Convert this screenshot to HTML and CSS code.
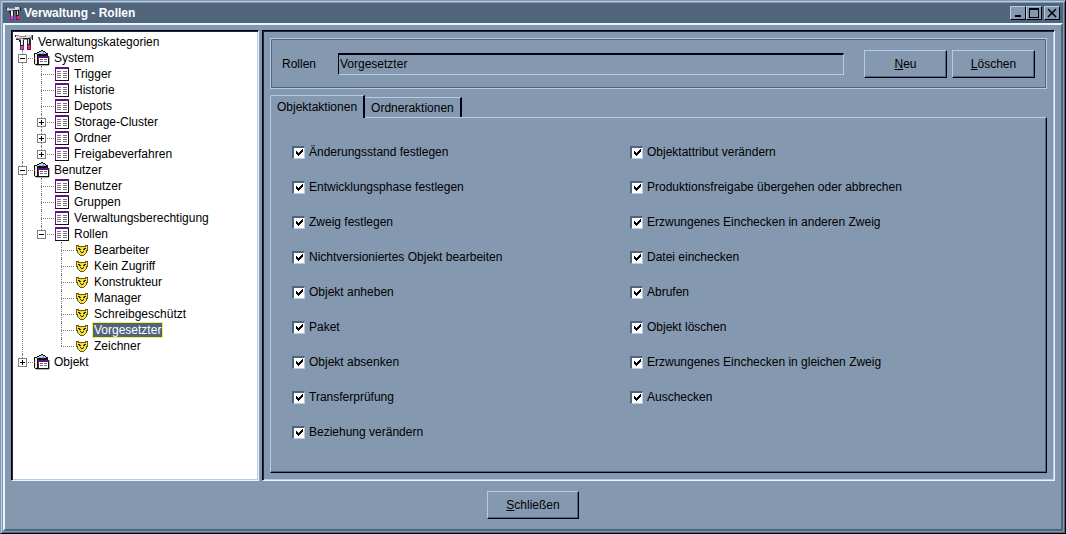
FILE: index.html
```html
<!DOCTYPE html>
<html lang="de">
<head>
  <meta charset="UTF-8">
  <title>Verwaltung - Rollen</title>
  <link rel="stylesheet" href="styles.css">
</head>
<body>
  <svg class="sprite" aria-hidden="true">
    <symbol id="tools" viewBox="0 0 18 16" shape-rendering="crispEdges">
      <path fill="#8c8c94" d="M1 1h3v1h6V1h7v4h-2v1H1z"/>
      <path fill="#dcdce0" d="M1 2h3v1h7V1h5v2h-2v1H1z"/>
      <path fill="#222" d="M0 1h1v2H0zM1 5h3v1H1zM8 4h7v1H8zM17 1h1v5h-1zM4 6h1v2H4z"/>
      <path fill="#222" d="M5 6h4v6H5zM12 5h4v6h-4z"/>
      <path fill="#d8d8d8" d="M6 5h2v6H6zM13 5h1v5h-1z"/>
      <path fill="#fff" d="M6 5h1v5H6z"/>
      <path fill="#8a1e9c" d="M5 12h4v4H5z"/>
      <path fill="#e040c8" d="M6 12h2v3H6z"/>
      <path fill="#80103c" d="M12 11h4v5h-4z"/>
      <path fill="#e82860" d="M13 11h2v4h-2z"/>
    </symbol>
    <symbol id="clip" viewBox="0 0 16 16" shape-rendering="crispEdges">
      <path fill="#b0b0b0" d="M12 4h2v2h2v9h-1v1H2v-1h10z"/>
      <path fill="#111" d="M0 3h3V2h2V1h2V0h2v1h2v1h1v1h2v3h1v9H1v-1H0z"/>
      <path fill="#f3efc0" d="M1 4h2v10H1z"/>
      <path fill="#a9b4e6" d="M5 2h2V1h2v1h2v1h1v1H3V3h2z"/>
      <path fill="#d4dcf8" d="M6 2h2v1H6z"/>
      <path fill="#fff" d="M5 8h9v6H5z"/>
      <path fill="#5c1488" d="M4 6h11v2H5v6H4z"/>
      <path fill="#777" d="M6 9h3v1H6zM10 9h3v1h-3zM6 11h3v1H6zM10 11h3v1h-3z"/>
    </symbol>
    <symbol id="list" viewBox="0 0 14 14" shape-rendering="crispEdges">
      <path fill="#111" d="M0 0h14v14H0z"/>
      <path fill="#fff" d="M1 2h12v11H1z"/>
      <path fill="#5c1488" d="M0 0h14v2H0zM0 2h1v11H0z"/>
      <path fill="#777" d="M2 4h4v1H2zM8 4h4v1H8zM2 6h4v1H2zM8 6h4v1H8zM2 8h4v1H2zM8 8h4v1H8zM2 10h4v1H2zM8 10h4v1H8z"/>
    </symbol>
    <symbol id="mask" viewBox="0 0 12 11" shape-rendering="crispEdges">
      <path fill="#6a5420" d="M0 0h3v1h6V0h3v6h-1v2h-1v1H9v1H8v1H4v-1H3V9H2V8H1V6H0z"/>
      <path fill="#f4e030" d="M1 1h1v1h8V1h1v4h-1v3H9v1H8v1H4V9H3V8H2V5H1z"/>
      <path fill="#222" d="M2 3h2v1h1v1H3V4H2zM8 3h2v1H9v1H7V4h1zM4 6h1v1h2V6h1v1H7v1H5V7H4z"/>
    </symbol>
  </svg>

  <div class="window">
    <header class="titlebar">
      <svg class="icon-app"><use href="#tools"/></svg>
      <h1>Verwaltung - Rollen</h1>
      <button class="win-btn" aria-label="Minimieren"><svg viewBox="0 0 10 10" shape-rendering="crispEdges"><path d="M2 7h6v2H2z"/></svg></button>
      <button class="win-btn" aria-label="Maximieren"><svg viewBox="0 0 10 10" shape-rendering="crispEdges"><path fill-rule="evenodd" d="M0 0h10v10H0zM1 2v7h8V2z"/></svg></button>
      <button class="win-btn win-close" aria-label="Schließen"><svg viewBox="0 0 10 10"><path d="M1 1l8 8M9 1L1 9" stroke="#000" stroke-width="1.5"/></svg></button>
    </header>

    <div class="content">
      <main class="panes">
        <nav class="tree">
          <div class="root"><svg class="icon-tools"><use href="#tools"/></svg><span>Verwaltungskategorien</span></div>
          <ul>
            <li>
              <div class="node"><button class="toggle" aria-label="Zuklappen"></button><svg class="icon-clip"><use href="#clip"/></svg><span>System</span></div>
              <ul>
                <li><div class="node"><svg class="icon-list"><use href="#list"/></svg><span>Trigger</span></div></li>
                <li><div class="node"><svg class="icon-list"><use href="#list"/></svg><span>Historie</span></div></li>
                <li><div class="node"><svg class="icon-list"><use href="#list"/></svg><span>Depots</span></div></li>
                <li><div class="node"><button class="toggle plus" aria-label="Aufklappen"></button><svg class="icon-list"><use href="#list"/></svg><span>Storage-Cluster</span></div></li>
                <li><div class="node"><button class="toggle plus" aria-label="Aufklappen"></button><svg class="icon-list"><use href="#list"/></svg><span>Ordner</span></div></li>
                <li><div class="node"><button class="toggle plus" aria-label="Aufklappen"></button><svg class="icon-list"><use href="#list"/></svg><span>Freigabeverfahren</span></div></li>
              </ul>
            </li>
            <li>
              <div class="node"><button class="toggle" aria-label="Zuklappen"></button><svg class="icon-clip"><use href="#clip"/></svg><span>Benutzer</span></div>
              <ul>
                <li><div class="node"><svg class="icon-list"><use href="#list"/></svg><span>Benutzer</span></div></li>
                <li><div class="node"><svg class="icon-list"><use href="#list"/></svg><span>Gruppen</span></div></li>
                <li><div class="node"><svg class="icon-list"><use href="#list"/></svg><span>Verwaltungsberechtigung</span></div></li>
                <li>
                  <div class="node"><button class="toggle" aria-label="Zuklappen"></button><svg class="icon-list"><use href="#list"/></svg><span>Rollen</span></div>
                  <ul>
                    <li><div class="node"><svg class="icon-mask"><use href="#mask"/></svg><span>Bearbeiter</span></div></li>
                    <li><div class="node"><svg class="icon-mask"><use href="#mask"/></svg><span>Kein Zugriff</span></div></li>
                    <li><div class="node"><svg class="icon-mask"><use href="#mask"/></svg><span>Konstrukteur</span></div></li>
                    <li><div class="node"><svg class="icon-mask"><use href="#mask"/></svg><span>Manager</span></div></li>
                    <li><div class="node"><svg class="icon-mask"><use href="#mask"/></svg><span>Schreibgeschützt</span></div></li>
                    <li><div class="node"><svg class="icon-mask"><use href="#mask"/></svg><span class="selected">Vorgesetzter</span></div></li>
                    <li><div class="node"><svg class="icon-mask"><use href="#mask"/></svg><span>Zeichner</span></div></li>
                  </ul>
                </li>
              </ul>
            </li>
            <li>
              <div class="node"><button class="toggle plus" aria-label="Aufklappen"></button><svg class="icon-clip"><use href="#clip"/></svg><span>Objekt</span></div>
            </li>
          </ul>
        </nav>

        <section class="detail">
          <div class="role-box">
            <label for="rolle">Rollen</label>
            <input type="text" id="rolle" value="Vorgesetzter">
            <button class="btn"><u>N</u>eu</button>
            <button class="btn"><u>L</u>öschen</button>
          </div>

          <div class="tabs" role="tablist">
            <button class="tab active" role="tab" aria-selected="true">Objektaktionen</button>
            <button class="tab" role="tab" aria-selected="false">Ordneraktionen</button>
          </div>

          <div class="tab-panel" role="tabpanel">
            <div class="checks">
              <label><input type="checkbox" checked>Änderungsstand festlegen</label>
              <label><input type="checkbox" checked>Entwicklungsphase festlegen</label>
              <label><input type="checkbox" checked>Zweig festlegen</label>
              <label><input type="checkbox" checked>Nichtversioniertes Objekt bearbeiten</label>
              <label><input type="checkbox" checked>Objekt anheben</label>
              <label><input type="checkbox" checked>Paket</label>
              <label><input type="checkbox" checked>Objekt absenken</label>
              <label><input type="checkbox" checked>Transferprüfung</label>
              <label><input type="checkbox" checked>Beziehung verändern</label>
            </div>
            <div class="checks">
              <label><input type="checkbox" checked>Objektattribut verändern</label>
              <label><input type="checkbox" checked>Produktionsfreigabe übergehen oder abbrechen</label>
              <label><input type="checkbox" checked>Erzwungenes Einchecken in anderen Zweig</label>
              <label><input type="checkbox" checked>Datei einchecken</label>
              <label><input type="checkbox" checked>Abrufen</label>
              <label><input type="checkbox" checked>Objekt löschen</label>
              <label><input type="checkbox" checked>Erzwungenes Einchecken in gleichen Zweig</label>
              <label><input type="checkbox" checked>Auschecken</label>
            </div>
          </div>
        </section>
      </main>

      <footer>
        <button class="btn btn-close"><u>S</u>chließen</button>
      </footer>
    </div>
  </div>
</body>
</html>
```

FILE: styles.css
```css
:root {
  --face: #8498b0;
  --light: #b4cce4;
  --white: #e8f6ff;
  --shade: #50647c;
  --dark: #000010;
}

* {
  box-sizing: border-box;
}

body {
  margin: 0;
  background: var(--face);
  color: #000;
  font-family: "Liberation Sans", Arial, sans-serif;
  font-size: 12px;
  line-height: 16px;
}

button,
input {
  font: inherit;
  color: inherit;
  margin: 0;
  padding: 0;
  border-radius: 0;
}

ul {
  list-style: none;
  margin: 0;
  padding: 0;
}

.sprite {
  position: absolute;
  width: 0;
  height: 0;
}

.window {
  display: flex;
  flex-direction: column;
  min-height: 100vh;
  padding: 2px;
  border: 1px solid var(--dark);
  border-top-color: var(--face);
  border-left-color: var(--face);
  box-shadow: inset 1px 1px var(--light), inset -1px -1px var(--shade);
}

/* Titelleiste */
.titlebar {
  display: flex;
  align-items: center;
  height: 20px;
  padding: 0 3px;
  background: var(--shade);
}

.titlebar h1 {
  flex: 1;
  margin: 0 0 0 3px;
  color: #fff;
  font-size: 12px;
  line-height: 16px;
}

.icon-app {
  width: 15px;
  height: 14px;
}

.win-btn {
  display: flex;
  align-items: center;
  justify-content: center;
  width: 16px;
  height: 14px;
  background: var(--face);
  border: 1px solid var(--dark);
  border-top-color: var(--light);
  border-left-color: var(--light);
}

.win-btn svg {
  width: 10px;
  height: 10px;
}

.win-close {
  margin-left: 2px;
}

.content {
  display: flex;
  flex-direction: column;
  flex: 1;
  padding: 5px 6px 10px;
  border: 2px solid var(--shade);
  border-top-color: var(--white);
  border-left-color: var(--white);
}

.panes {
  display: grid;
  grid-template-columns: 248px 1fr;
  gap: 3px;
  flex: 1;
}

.tree,
.detail {
  border: 1px solid var(--white);
  border-top-color: var(--dark);
  border-left-color: var(--dark);
  box-shadow: inset 1px 1px #20283c, inset -1px -1px var(--light);
}

/* Baum */
.tree {
  padding: 3px;
  background: #fff;
}

.root,
.node {
  display: flex;
  align-items: center;
  height: 16px;
}

.root span {
  margin-left: 5px;
}

.icon-tools {
  width: 18px;
  height: 16px;
}

.icon-clip {
  width: 16px;
  height: 16px;
}

.icon-list {
  width: 14px;
  height: 14px;
  margin-left: 1px;
}

.icon-mask {
  width: 12px;
  height: 11px;
  margin-left: 2px;
  margin-right: 1px;
}

.node span {
  padding: 0 1px;
  margin-left: 4px;
  line-height: 14px;
}

.icon-clip + span {
  margin-left: 3px;
}

.node .selected {
  background: var(--shade);
  color: #fff;
  outline: 1px solid #f4f040;
}

.tree li {
  position: relative;
  padding-left: 19px;
}

.tree li li {
  padding-left: 20px;
}

/* gepunktete Verbindungslinien */
.tree li::before,
.tree li::after {
  content: "";
  position: absolute;
  left: 7px;
}

.tree li::before {
  top: 0;
  bottom: 0;
  border-left: 1px dotted #808080;
}

.tree li:last-child::before {
  bottom: auto;
  height: 8px;
}

.tree li::after {
  top: 8px;
  width: 13px;
  border-top: 1px dotted #808080;
}

.toggle {
  position: absolute;
  z-index: 1;
  left: 3px;
  top: 4px;
  width: 9px;
  height: 9px;
  border: 1px solid #808080;
  background: linear-gradient(#000, #000) center / 5px 1px no-repeat, #fff;
}

.toggle.plus {
  background: linear-gradient(#000, #000) center / 5px 1px no-repeat, linear-gradient(#000, #000) center / 1px 5px no-repeat, #fff;
}

/* Rechte Seite */
.detail {
  display: flex;
  flex-direction: column;
  padding: 7px;
}

.role-box {
  display: flex;
  align-items: center;
  height: 51px;
  padding: 0 11px;
  border: 1px solid var(--light);
  outline: 1px solid var(--shade);
  outline-offset: -2px;
}

.role-box label {
  width: 56px;
}

.role-box input {
  flex: 1;
  height: 22px;
  margin-right: 20px;
  padding-left: 1px;
  background: var(--face);
  border: 1px solid var(--light);
  border-top: 2px solid var(--dark);
  border-left-color: var(--dark);
}

.btn {
  width: 83px;
  height: 28px;
  background: var(--face);
  border: 1px solid var(--dark);
  border-top-color: var(--light);
  border-left-color: var(--light);
  box-shadow: inset -1px -1px var(--shade);
}

.btn + .btn {
  margin-left: 5px;
}

.btn-close {
  width: 92px;
}

.tabs {
  display: flex;
  align-items: flex-end;
  margin-top: 6px;
}

.tab {
  height: 20px;
  padding: 0 6px;
  background: var(--face);
  border: 1px solid var(--light);
  border-right: 2px solid var(--dark);
  border-bottom: 0;
  border-left: 0;
}

.tab.active {
  position: relative;
  height: 23px;
  margin-bottom: -1px;
  border-left: 1px solid var(--light);
  border-top-left-radius: 2px;
}

.tab-panel {
  display: grid;
  grid-template-columns: 338px 1fr;
  align-items: start;
  flex: 1;
  padding: 26px 21px;
  border: 1px solid var(--dark);
  border-top-color: var(--light);
  border-left-color: var(--light);
  box-shadow: inset -1px -1px var(--shade);
}

.checks {
  display: grid;
  gap: 19px;
}

.checks label {
  display: flex;
  align-items: center;
}

.checks input {
  appearance: none;
  width: 13px;
  height: 13px;
  margin-right: 4px;
  background: #fff;
  border: 1px solid var(--light);
  border-top: 2px solid var(--shade);
  border-left: 2px solid var(--shade);
}

.checks input:checked {
  background: #fff url("data:image/svg+xml,%3Csvg xmlns='http://www.w3.org/2000/svg' viewBox='0 0 7 7' shape-rendering='crispEdges'%3E%3Cpath d='M0 2h1v1h1v1h1V3h1V2h1V1h1V0h1v3H6v1H5v1H4v1H3v1H2V6H1V5H0z'/%3E%3C/svg%3E") center / 7px 7px no-repeat;
}

footer {
  display: flex;
  justify-content: center;
  padding-top: 10px;
}
```
